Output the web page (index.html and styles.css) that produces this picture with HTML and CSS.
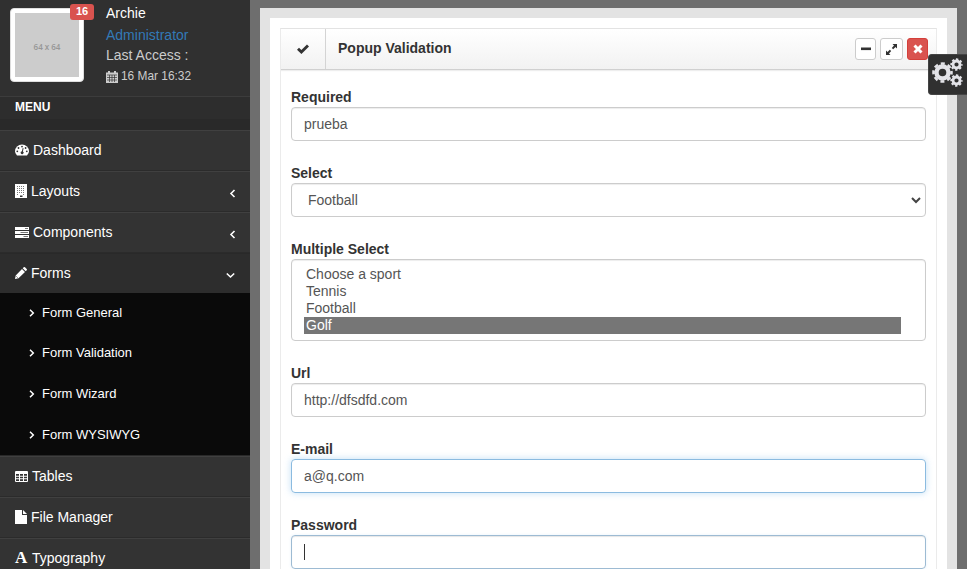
FILE: index.html
```
<!DOCTYPE html>
<html lang="en">
<head>
<meta charset="utf-8">
<title>Popup Validation</title>
<link rel="stylesheet" href="styles.css">
</head>
<body>
<div class="page">
  <aside class="sidebar">
    <div class="user">
      <div class="avatar"><div class="avatar-img">64 x 64</div><span class="badge">16</span></div>
      <div class="user-info">
        <div class="name">Archie</div>
        <div class="role">Administrator</div>
        <div class="access">Last Access :</div>
        <div class="date"><svg width="12" height="12" viewBox="0 0 12 12"><path fill="#ccc" d="M0 1.500h2V0h2v1.500h4V0h2v1.500h2V12H0z"/><path stroke="#333" stroke-width=".7" d="M1 4h10M1 6.500h10M1 9h10M3.500 4v7M6 4v7M8.500 4v7"/></svg>16 Mar 16:32</div>
      </div>
    </div>
    <div class="menu-title">MENU</div>
    <div class="divider"></div>
    <nav>
      <div class="item"><svg width="14" height="12" viewBox="0 0 14 12"><path fill="#fff" d="M2 11.5Q0 9.5 0 7.2a7 6.8 0 0 1 14 0q0 2.3-2 4.3z"/><g fill="#333"><circle cx="2.3" cy="7.3" r=".9"/><circle cx="3.5" cy="4" r=".9"/><circle cx="7" cy="2.6" r=".9"/><circle cx="10.6" cy="4" r=".9"/><circle cx="11.8" cy="7.3" r=".9"/><path d="M7.7 4l.9.2-.7 3.2a1.5 1.5 0 1 1-1-.2z"/></g></svg><span>Dashboard</span></div>
      <div class="item"><svg width="12" height="14" viewBox="0 0 12 14"><path fill="#fff" d="M0 0h12v14H0z"/><path stroke="#777" stroke-dasharray="1 1" d="M2 2.500h8M2 4.500h8M2 6.500h8M2 8.500h8M2 10.500h2M8 10.500h2"/><path fill="#333" d="M5 11.500h2.500V13H5z"/></svg><span>Layouts</span><svg class="arrow" width="7" height="9" viewBox="0 0 7 9"><path d="M5.500 1L2 4.500 5.500 8"/></svg></div>
      <div class="item"><svg width="14" height="11" viewBox="0 0 14 11"><path fill="#fff" d="M0 0h14v3H0zM0 4h14v3H0zM0 8h14v3H0z"/><path stroke="#555" stroke-width=".8" d="M10 1.500h3M5.500 5.500H13M8.500 9.500H13"/></svg><span>Components</span><svg class="arrow" width="7" height="9" viewBox="0 0 7 9"><path d="M5.500 1L2 4.500 5.500 8"/></svg></div>
      <div class="item open"><svg width="12" height="12" viewBox="0 0 12 12"><path fill="#fff" d="M0 12l.7-3.600L7 2l3 3-6.500 6.300zM7.700 1.300L8.700.3q.6-.6 1.300 0l1.700 1.700q.5.6 0 1.300l-1 1z"/><path stroke="#333" stroke-width=".6" fill="none" d="M1.200 9.200l1.600 1.600"/></svg><span>Forms</span><svg class="arrow down" width="9" height="7" viewBox="0 0 9 7"><path d="M.8 1.500L4.500 5l3.700-3.500"/></svg></div>
      <div class="submenu">
        <div class="sub"><svg width="6" height="8" viewBox="0 0 6 8"><path d="M1 .8L4.300 4 1 7.200"/></svg><span>Form General</span></div>
        <div class="sub"><svg width="6" height="8" viewBox="0 0 6 8"><path d="M1 .8L4.300 4 1 7.200"/></svg><span>Form Validation</span></div>
        <div class="sub"><svg width="6" height="8" viewBox="0 0 6 8"><path d="M1 .8L4.300 4 1 7.200"/></svg><span>Form Wizard</span></div>
        <div class="sub"><svg width="6" height="8" viewBox="0 0 6 8"><path d="M1 .8L4.300 4 1 7.200"/></svg><span>Form WYSIWYG</span></div>
      </div>
      <div class="item"><svg width="13" height="11" viewBox="0 0 13 11"><rect width="13" height="11" rx="1" fill="#fff"/><path fill="#333" d="M1 3h3v1.700H1zM5 3h3v1.700H5zM9 3h3v1.700H9zM1 5.700h3v1.600H1zM5 5.700h3v1.600H5zM9 5.700h3v1.600H9zM1 8.300h3V10H1zM5 8.300h3V10H5zM9 8.300h3V10H9z"/></svg><span>Tables</span></div>
      <div class="item"><svg width="12" height="14" viewBox="0 0 12 14"><path fill="#fff" d="M0 0h7v5h5v9H0zM8 0l4 4H8z"/></svg><span>File Manager</span></div>
      <div class="item"><b class="font-icon">A</b><span>Typography</span></div>
    </nav>
  </aside>
  <main class="content">
    <section class="box">
      <header>
        <div class="head-icon"><svg width="12" height="10" viewBox="0 0 12 10"><path fill="none" stroke="#333" stroke-width="2.900" d="M1 4.700L4.400 8 11 1.500"/></svg></div>
        <h5>Popup Validation</h5>
        <div class="tools">
          <span class="btn minus"><svg width="10" height="10" viewBox="0 0 10 10"><path stroke="#333" stroke-width="2.600" d="M0 4.800h10"/></svg></span>
          <span class="btn expand"><svg width="11" height="11" viewBox="0 0 11 11"><path fill="#333" d="M6.500 0H11v4.500L9.500 3.100 7.200 5.300 5.800 3.900l2.200-2.300zM4.500 11H0V6.500l1.500 1.400 2.300-2.200 1.400 1.400L3 9.400z"/></svg></span>
          <span class="btn close"><svg width="10" height="10" viewBox="0 0 10 10"><path stroke="#fff" stroke-width="3" d="M1.500 1.500l7 7M8.500 1.500l-7 7"/></svg></span>
        </div>
      </header>
      <form class="fields">
        <div class="field"><label>Required</label><div class="control">prueba</div></div>
        <div class="field"><label>Select</label><div class="control select">Football<svg width="10" height="7" viewBox="0 0 10 7"><path fill="none" stroke="#444" stroke-width="2" d="M1 1l4 4 4-4"/></svg></div></div>
        <div class="field"><label>Multiple Select</label><div class="control multi"><div>Choose a sport</div><div>Tennis</div><div>Football</div><div class="selected">Golf</div></div></div>
        <div class="field"><label>Url</label><div class="control">http://dfsdfd.com</div></div>
        <div class="field"><label>E-mail</label><div class="control focus">a@q.com</div></div>
        <div class="field"><label>Password</label><div class="control active"><i class="caret"></i></div></div>
      </form>
    </section>
  </main>
  <div class="settings">
    <svg width="31" height="30" viewBox="0 0 31 30" fill="none" stroke="#e3e3e8">
      <circle cx="10.500" cy="14.500" r="6" stroke-width="4.400"/><circle cx="10.500" cy="14.500" r="9" stroke-width="2.600" stroke-dasharray="4 3.069" stroke-dashoffset="2"/>
      <circle cx="24.500" cy="6.500" r="3.500" stroke-width="2.800"/><circle cx="24.500" cy="6.500" r="5.200" stroke-width="2" stroke-dasharray="2.300 1.784" stroke-dashoffset="1.150"/>
      <circle cx="24.500" cy="22.500" r="3.500" stroke-width="2.800"/><circle cx="24.500" cy="22.500" r="5.200" stroke-width="2" stroke-dasharray="2.300 1.784" stroke-dashoffset="1.150"/>
    </svg>
  </div>
</div>
</body>
</html>
```
FILE: styles.css
```
* { box-sizing: border-box; }
html, body { margin: 0; height: 569px; overflow: hidden; background: #fff; }
body { font: 14px/20px "Liberation Sans", Arial, sans-serif; color: #333; }
svg { display: block; flex: none; }
.page { position: relative; display: flex; width: 967px; height: 569px; background: #6e6e6e; overflow: hidden; }
.sidebar { width: 250px; background: #333; color: #fff; flex: none; }
.user { display: flex; height: 96px; padding: 8px 0 0 10px; gap: 22px; background: #303030; }
.avatar { position: relative; width: 74px; height: 74px; padding: 5px; background: #fff; border: 1px solid #ddd; border-radius: 4px; }
.avatar-img { height: 64px; margin: -1px; background: #ccc; color: #969696; font: 600 8px/67px "Open Sans", sans-serif; text-align: center; }
.badge { position: absolute; top: -5px; right: -11px; width: 24px; height: 16px; border-radius: 3px; background: #d9534f; color: #fff; font: bold 11px/15px "Liberation Sans", sans-serif; text-align: center; }
.user-info { margin-top: -5px; color: #ccc; }
.user-info div { height: 21px; line-height: 21px; }
.user-info .name { color: #fff; }
.user-info .role { height: 22px; line-height: 23px; color: #337ab7; }
.user-info .access { height: 20px; line-height: 18px; }
.user-info .date { display: flex; align-items: center; gap: 3px; font-size: 11.900px; }
.menu-title { height: 23px; padding-left: 15px; border-top: 1px solid #3c3c3c; background: #2d2d2d; font: bold 12px/20px "Liberation Sans", sans-serif; }
.divider { height: 11px; background: #292929; }
.item { display: flex; align-items: center; height: 41px; padding: 0 14px 1px 15px; gap: 4px; border-top: 1px solid #404040; border-bottom: 1px solid #2b2b2b; }
.item.open { background: #2d2d2d; border-top-color: #292929; border-bottom-color: #2d2d2d; height: 40px; }
.arrow { margin: 4px 0 0 auto; fill: none; stroke: #fff; stroke-width: 1.600; }
.arrow.down { margin: 5px 1px 0 auto; }
.submenu { height: 163px; background: #0a0a0a; border-bottom: 1px solid #292929; }
.sub { display: flex; align-items: center; height: 40.600px; padding: 0 0 1px 29px; gap: 7px; font-size: 13px; }
.sub svg { fill: none; stroke: #fff; stroke-width: 1.500; }
.font-icon { width: 13px; font: bold 17px/18px "Liberation Serif", serif; }
.content { width: 697px; height: 600px; margin: 8px 0 0 10px; padding: 10px; border: 10px solid #e3e3e3; background: #fff; flex: none; }
.box { width: 657px; height: 580px; border: 1px solid #e5e5e5; border-color: #e3e3e3 #ebebeb; }
.box header { display: flex; height: 41px; border-bottom: 1px solid #d0d0d0; background: linear-gradient(#fff, #f2f2f2); box-shadow: 0 1px 1px #eee; }
.head-icon { display: flex; width: 45px; align-items: center; justify-content: center; border-right: 1px solid #d4d4d4; }
h5 { margin: 0 0 0 12px; font-size: 14px; line-height: 38px; }
.tools { display: flex; gap: 4px; margin: 9px 8px 0 auto; }
.btn { display: flex; align-items: center; justify-content: center; height: 22px; width: 21px; border: 1px solid #ccc; border-radius: 3px; background: #fff; }
.btn.expand { width: 23px; }
.btn.close { background: #d9534f; border-color: #d43f3a; }
.fields { padding: 18px 10px 0; }
.field { margin-bottom: 23px; }
label { display: block; height: 19px; font-weight: bold; line-height: 19px; }
.control { width: 635px; height: 34px; padding: 6px 12px; border: 1px solid #ccc; border-radius: 4px; color: #555; box-shadow: inset 0 1px 1px rgba(0,0,0,.075); }
.select { display: flex; padding: 6px 4px 6px 16px; justify-content: space-between; align-items: center; }
.multi { height: 82px; padding: 6px 24px 6px 12px; line-height: 17px; }
.multi div { height: 17px; padding-left: 2px; }
.multi .selected { background: #767676; color: #fff; }
.focus { border-color: #8bbbe0; box-shadow: 0 0 7px rgba(102,175,233,.4); }
.active { border-color: #9dbbd3; box-shadow: inset 0 1px 1px rgba(0,0,0,.1), 0 0 3px rgba(102,175,233,.15); }
.caret { display: block; width: 1px; height: 16px; margin-top: 2px; background: #333; }
.settings { position: absolute; top: 54px; right: 0; width: 39px; height: 41px; padding: 3px 0 0 3px; border: 1px solid #444; border-right: 0; border-radius: 4px 0 0 4px; background: #303030; }
```
